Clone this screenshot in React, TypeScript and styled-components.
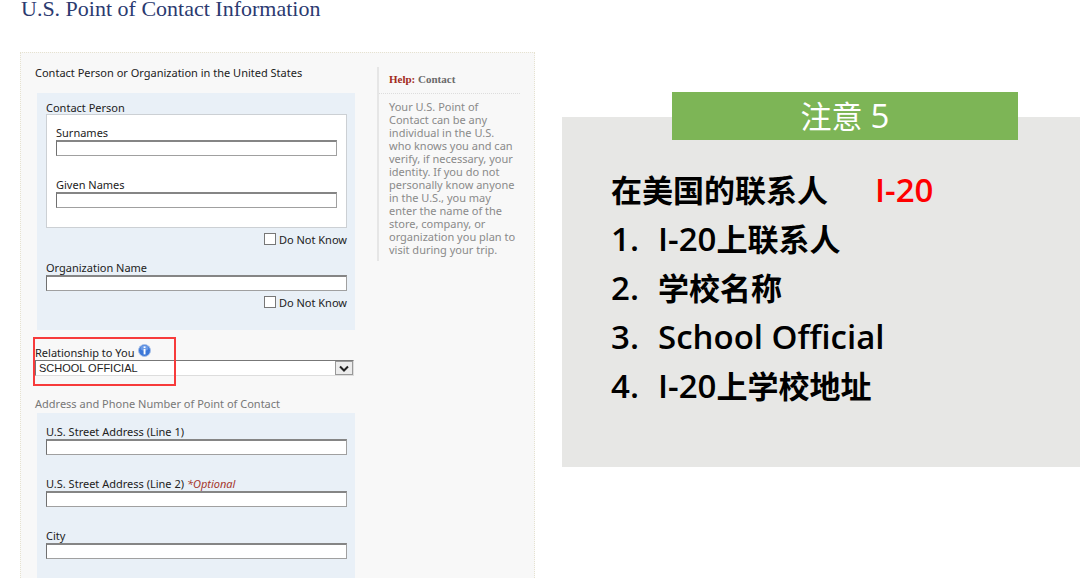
import React, { useId } from "react";
import styled, { createGlobalStyle } from "styled-components";

const GlobalStyle = createGlobalStyle`
  *, *::before, *::after { box-sizing: border-box; }
  body {
    margin: 0;
    background: #fff;
    color: #222;
    font-family: "Noto Sans", Tahoma, Verdana, sans-serif;
    font-size: 11px;
    line-height: 13px;
  }
`;

const Page = styled.main`
  display: grid;
  grid-template-columns: minmax(0, 515fr) minmax(0, 518fr);
  column-gap: 27px;
  align-items: start;
  padding: 0 0 4px 20px;
`;

const PageTitle = styled.h1`
  margin: 0 0 34px;
  padding-left: 1px;
  color: #2b3a70;
  font-family: "Liberation Serif", "Times New Roman", serif;
  font-size: 22px;
  font-weight: 400;
  line-height: 18px;
  white-space: nowrap;
`;

const Panel = styled.div`
  display: grid;
  grid-template-columns: minmax(0, 1fr) 143px;
  column-gap: 22px;
  align-items: start;
  padding: 14px 14px 0;
  border: 1px dotted #e6e2d0;
  border-bottom: 0;
  background: #f8f8f8;
`;

const Form = styled.form`
  display: flex;
  flex-direction: column;
`;

const SectionTitle = styled.h2<{ $muted?: boolean }>`
  margin: ${(p) => (p.$muted ? "22px 0 4px" : "0 0 15px")};
  color: ${(p) => (p.$muted ? "#777" : "#222")};
  font-size: 11px;
  font-weight: 400;
  line-height: 11px;
`;

const Group = styled.div<{ $roomy?: boolean }>`
  display: flex;
  flex-direction: column;
  gap: ${(p) => (p.$roomy ? "23px" : "0")};
  margin-left: 2px;
  padding: ${(p) => (p.$roomy ? "13px 8px 19px 9px" : "8px 8px 21px 9px")};
  background: #e9f0f7;
`;

const NameFields = styled.fieldset`
  display: contents;
`;

const Legend = styled.legend`
  padding: 0;
`;

const NameBox = styled.div`
  display: flex;
  flex-direction: column;
  gap: 23px;
  padding: 12px 9px 19px;
  border: 1px solid #ccd0d4;
  background: #fff;
`;

const FieldWrap = styled.div`
  display: flex;
  flex-direction: column;
`;

const FieldLabel = styled.label`
  padding-bottom: 2px;
  line-height: 11px;
`;

const TextInput = styled.input`
  width: 100%;
  height: 16px;
  padding: 0 3px;
  border: 1px solid #a0a0a0;
  border-top: 2px solid #858585;
  border-left-color: #707070;
  border-radius: 0;
  background: #fff;
  font: 11px "Liberation Sans", Arial, sans-serif;
`;

const Optional = styled.em`
  color: #a5352b;
`;

const CheckRow = styled.label<{ $spaced?: boolean }>`
  display: flex;
  align-items: center;
  justify-content: flex-end;
  gap: 3px;
  height: 14px;
  margin: ${(p) => (p.$spaced ? "4px 0 16px" : "4px 0 0")};
`;

const CheckBox = styled.input`
  appearance: none;
  width: 12px;
  height: 12px;
  margin: 0;
  border: 1px solid #777;
  background: #fff;
`;

const Relationship = styled.div`
  position: relative;
  margin-top: 17px;
`;

const RelationshipLabel = styled.label`
  display: flex;
  gap: 4px;
  height: 13px;
  line-height: 11px;
`;

const InfoIcon = styled.svg`
  width: 13px;
  height: 13px;
  margin-top: -3px;
`;

const SelectBox = styled.div`
  display: grid;
  grid-template-columns: minmax(0, 1fr) 18px;
  margin-right: 1px;
  height: 16px;
  border: 1px solid #ddd;
  border-top: 1px solid #777;
  border-left-color: #777;
  background: #fff;
`;

const Select = styled.select`
  grid-area: 1 / 1 / 2 / 3;
  appearance: none;
  padding: 0 20px 0 3px;
  border: 0;
  background: transparent;
  color: #222;
  font: 11px/14px "Liberation Sans", Arial, sans-serif;
`;

const SelectArrow = styled.span`
  display: flex;
  grid-area: 1 / 2;
  align-items: center;
  justify-content: center;
  border: 1px solid #999;
  background: #ececec;
  pointer-events: none;
`;

const Highlight = styled.span`
  position: absolute;
  top: -10px;
  left: -2px;
  width: 143px;
  height: 49px;
  border: 2px solid #f73b3b;
  pointer-events: none;
`;

const Help = styled.aside`
  padding-bottom: 5px;
  border-left: 2px solid #e6e6e6;
  color: #8a8a8a;
`;

const HelpTitle = styled.h2`
  margin: 0;
  padding: 6px 0 7px 10px;
  border-bottom: 1px dotted #ddd;
  color: #6a6a6a;
  font: bold 11px/13px "Liberation Serif", "Times New Roman", serif;
`;

const HelpAccent = styled.span`
  color: #a22a20;
`;

const HelpText = styled.p`
  margin: 0;
  padding: 6px 2px 0 10px;
`;

const Note = styled.section`
  position: relative;
  margin-top: 117px;
  padding: 49px 0 56px 49px;
  background: #e7e7e5;
  color: #000;
  font-family: "Open Sans", "Noto Sans CJK SC", sans-serif;
  font-size: 31px;
  font-weight: 600;
  line-height: 49px;
`;

const NoteTag = styled.h2`
  position: absolute;
  top: -25px;
  right: 12%;
  left: 110px;
  margin: 0;
  background: #7db556;
  color: #fff;
  font-size: 31px;
  font-weight: 400;
  line-height: 48px;
  text-align: center;
`;

const NoteHeading = styled.p`
  display: flex;
  align-items: baseline;
  gap: 47px;
  height: 49px;
  margin: 0;
`;

const Latin = styled.span<{ $red?: boolean }>`
  color: ${(p) => (p.$red ? "#f00" : "inherit")};
  font-size: 33px;
  line-height: 1;
`;

const NoteList = styled.ol`
  margin: 0;
  padding: 0;
  list-style: none;
`;

const NoteItem = styled.li`
  display: grid;
  grid-template-columns: 47px minmax(0, 1fr);
`;

function Field({ label, optional }: { label: string; optional?: boolean }) {
  const id = useId();
  return (
    <FieldWrap>
      <FieldLabel htmlFor={id}>
        {label}
        {optional && <Optional> *Optional</Optional>}
      </FieldLabel>
      <TextInput id={id} type="text" />
    </FieldWrap>
  );
}

function DoNotKnow({ spaced }: { spaced?: boolean }) {
  return (
    <CheckRow $spaced={spaced}>
      <CheckBox type="checkbox" />
      Do Not Know
    </CheckRow>
  );
}

const steps = [
  { latin: "I-20", chinese: "上联系人" },
  { latin: "", chinese: "学校名称" },
  { latin: "School Official", chinese: "" },
  { latin: "I-20", chinese: "上学校地址" },
];

export default function App() {
  return (
    <>
      <GlobalStyle />
      <Page>
        <section>
          <PageTitle>U.S. Point of Contact Information</PageTitle>
          <Panel>
            <Form>
              <SectionTitle>Contact Person or Organization in the United States</SectionTitle>
              <Group>
                <NameFields>
                  <Legend>Contact Person</Legend>
                  <NameBox>
                    <Field label="Surnames" />
                    <Field label="Given Names" />
                  </NameBox>
                </NameFields>
                <DoNotKnow spaced />
                <Field label="Organization Name" />
                <DoNotKnow />
              </Group>

              <Relationship>
                <RelationshipLabel htmlFor="relationship">
                  Relationship to You
                  <InfoIcon viewBox="0 0 13 13" aria-hidden="true">
                    <circle cx="6.5" cy="6.5" r="6" fill="#3c78d8" stroke="#a9c0e6" />
                    <ellipse cx="6.5" cy="4" rx="4" ry="2.8" fill="#6a9ae6" />
                    <rect x="5.6" y="2.4" width="1.9" height="1.7" fill="#fff" />
                    <rect x="5.6" y="5" width="1.9" height="5.4" fill="#fff" />
                  </InfoIcon>
                </RelationshipLabel>
                <SelectBox>
                  <Select id="relationship" defaultValue="school">
                    <option value="school">SCHOOL OFFICIAL</option>
                  </Select>
                  <SelectArrow>
                    <svg width="10" height="7" viewBox="0 0 10 7" aria-hidden="true">
                      <path d="M1 1.5l4 4 4-4" fill="none" stroke="#222" strokeWidth="2" />
                    </svg>
                  </SelectArrow>
                </SelectBox>
                <Highlight />
              </Relationship>

              <SectionTitle $muted>Address and Phone Number of Point of Contact</SectionTitle>
              <Group $roomy>
                <Field label="U.S. Street Address (Line 1)" />
                <Field label="U.S. Street Address (Line 2)" optional />
                <Field label="City" />
              </Group>
            </Form>

            <Help>
              <HelpTitle>
                <HelpAccent>Help:</HelpAccent> Contact
              </HelpTitle>
              <HelpText>
                Your U.S. Point of Contact can be any individual in the U.S. who knows you and can
                verify, if necessary, your identity. If you do not personally know anyone in the
                U.S., you may enter the name of the store, company, or organization you plan to
                visit during your trip.
              </HelpText>
            </Help>
          </Panel>
        </section>

        <Note lang="zh-CN">
          <NoteTag>
            注意 <Latin>5</Latin>
          </NoteTag>
          <NoteHeading>
            <span>在美国的联系人</span>
            <Latin $red>I-20</Latin>
          </NoteHeading>
          <NoteList>
            {steps.map((step, i) => (
              <NoteItem key={i}>
                <span>
                  <Latin>{i + 1}.</Latin>
                </span>
                <span>
                  {step.latin && <Latin>{step.latin}</Latin>}
                  {step.chinese}
                </span>
              </NoteItem>
            ))}
          </NoteList>
        </Note>
      </Page>
    </>
  );
}
